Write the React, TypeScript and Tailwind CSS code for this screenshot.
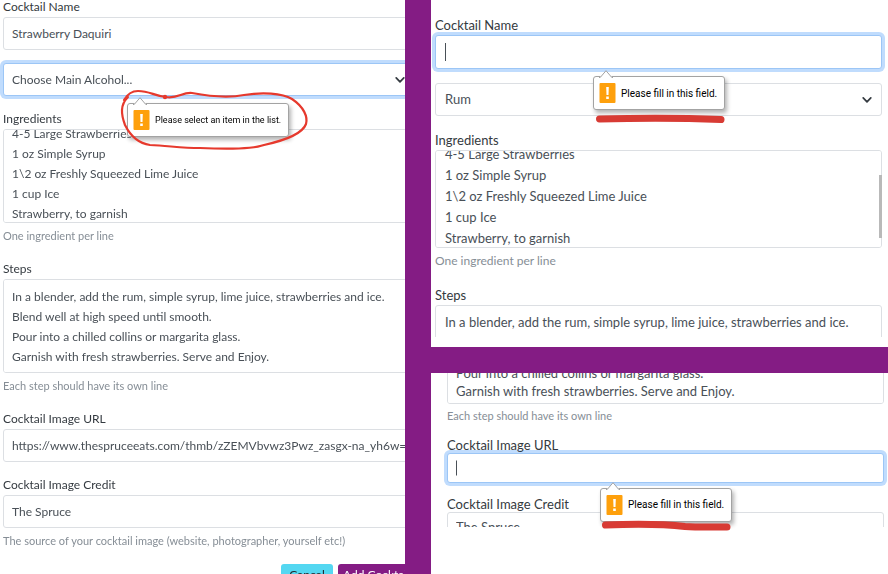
import { useEffect, useRef, type ReactNode } from "react";

function Tooltip({ text, size, children }: { text: string; size: "sm" | "md"; children?: ReactNode }) {
  const font = size === "sm" ? "text-[9px]" : "text-[10px]";
  return (
    <div role="alert" className="absolute z-10">
      <div
        className={`relative flex h-[34px] items-center gap-[5px] rounded-[3px] border border-[#a3a3a3] bg-white pr-[7px] pl-[5px] whitespace-nowrap text-black shadow-[2px_3px_4px_rgba(0,0,0,0.3)] [font-family:Roboto,sans-serif] ${font}`}
      >
        <svg aria-hidden="true" className="absolute -top-[7px] left-[5px]" width="14" height="8" viewBox="0 0 14 8">
          <path d="M0 8 L7 0.7 L14 8 Z" fill="#fff" />
          <path d="M0 7.5 H1.2 L7 0.7 L12.8 7.5 H14" fill="none" stroke="#a3a3a3" />
        </svg>
        <svg aria-hidden="true" width="17" height="20" viewBox="0 0 17 20">
          <rect x="0.5" width="16" height="20" rx="1" fill="#fea00c" />
          <path d="M7.2 4 H9.8 L9.5 12 H7.5 Z M7.2 13.4 H9.8 V16 H7.2 Z" fill="#fff" />
        </svg>
        <span>{text}</span>
      </div>
      {children}
    </div>
  );
}

function Chevron() {
  return (
    <svg aria-hidden="true" className="pointer-events-none absolute top-1/2 right-[10px] -translate-y-1/2" width="10" height="8" viewBox="0 0 10 8">
      <path d="M1.2 1.8 L5 5.8 L8.8 1.8" fill="none" stroke="#343a40" strokeWidth="1.7" strokeLinecap="round" strokeLinejoin="round" />
    </svg>
  );
}

function Caret({ className }: { className: string }) {
  return <span aria-hidden="true" className={`pointer-events-none absolute top-1/2 w-px -translate-y-1/2 bg-[#495057] ${className}`} />;
}

function ScrolledTextarea({ id, value, scroll, className }: { id: string; value: string; scroll: number; className: string }) {
  const ref = useRef<HTMLTextAreaElement>(null);
  useEffect(() => {
    if (ref.current) ref.current.scrollTop = scroll;
  }, [scroll]);
  return <textarea ref={ref} id={id} defaultValue={value} className={className} />;
}

const field = "block w-full rounded-[3px] border border-[#dcdfe3] bg-white text-[#495057] outline-none";
const focused = "block w-full rounded-[3px] border border-[#9cc6f6] bg-white text-[#495057] outline-none ring-3 ring-[#c0dcfd]";
const area = "resize-none [scrollbar-width:none] whitespace-pre overflow-x-hidden";

const ingredients =
  "4-5 Large Strawberries\n1 oz Simple Syrup\n1\\2 oz Freshly Squeezed Lime Juice\n1 cup Ice\nStrawberry, to garnish";
const steps =
  "In a blender, add the rum, simple syrup, lime juice, strawberries and ice.\nBlend well at high speed until smooth.\nPour into a chilled collins or margarita glass.\nGarnish with fresh strawberries. Serve and Enjoy.";

function SelectErrorForm() {
  return (
    <form className="-mt-[3px] -mr-[10px] flex flex-col gap-[13px] pl-[3px] text-xs leading-5">
      <div>
        <label htmlFor="a-name" className="block">Cocktail Name</label>
        <input id="a-name" defaultValue="Strawberry Daquiri" className={`${field} h-[33px] px-2`} />
      </div>
      <div className="relative">
        <select id="a-alcohol" aria-label="Main alcohol" className={`${focused} h-[33px] appearance-none px-2`}>
          <option>Choose Main Alcohol...</option>
        </select>
        <Chevron />
        <div className="absolute top-[40px] left-[124px]">
          <Tooltip size="sm" text="Please select an item in the list." />
          <svg aria-hidden="true" className="pointer-events-none absolute -top-[18px] -left-[13px] z-20" width="200" height="68" viewBox="0 0 200 68">
            <path
              d="M10 15 C14 8 18 6 24 6 C36 6 40 11 52 12 C64 14 68 7 78 8 C94 11 114 13 130 10 C148 7 168 8 178 14 C190 22 194 32 192 39 C188 50 168 56 150 60 C136 65 108 64 86 63 C68 63 56 61 36 60 C22 58 15 48 11 40 C7 29 6 20 14 12"
              fill="none"
              stroke="#e6392d"
              strokeWidth="2.2"
              strokeLinecap="round"
              strokeLinejoin="round"
            />
            <circle cx="51" cy="12" r="2.2" fill="#e6392d" />
          </svg>
        </div>
      </div>
      <div>
        <label htmlFor="a-ingredients" className="block">Ingredients</label>
        <ScrolledTextarea id="a-ingredients" value={ingredients} scroll={13} className={`${field} ${area} h-[94px] px-2 py-[7px]`} />
        <small className="mt-[3px] block text-[11px] text-[#868e96]">One ingredient per line</small>
      </div>
      <div>
        <label htmlFor="a-steps" className="block">Steps</label>
        <ScrolledTextarea id="a-steps" value={steps} scroll={0} className={`${field} ${area} h-[94px] px-2 py-[7px]`} />
        <small className="mt-[3px] block text-[11px] text-[#868e96]">Each step should have its own line</small>
      </div>
      <div>
        <label htmlFor="a-url" className="block">Cocktail Image URL</label>
        <input
          id="a-url"
          defaultValue="https://www.thespruceeats.com/thmb/zZEMVbvwz3Pwz_zasgx-na_yh6w=/804x0/filters"
          className={`${field} h-[33px] pl-2`}
        />
      </div>
      <div>
        <label htmlFor="a-credit" className="block">Cocktail Image Credit</label>
        <input id="a-credit" defaultValue="The Spruce" className={`${field} h-[33px] px-2`} />
        <small className="mt-[3px] block text-[11px] text-[#868e96]">
          The source of your cocktail image (website, photographer, yourself etc!)
        </small>
      </div>
      <div className="flex justify-end gap-[5px]">
        <button type="button" className="w-[52px] rounded-[3px] bg-[#54d7f1] py-[1px] text-[#212529]">Cancel</button>
        <button type="submit" className="w-[77px] rounded-[3px] bg-[#841c84] py-[1px] whitespace-nowrap text-white">Add Cocktail</button>
      </div>
    </form>
  );
}

function NameErrorForm() {
  return (
    <form className="flex flex-col gap-[14px] pt-[15px] pr-[6px] pl-1 text-[13px] leading-[21px]">
      <div>
        <label htmlFor="b-name" className="block leading-5">Cocktail Name</label>
        <div className="relative">
          <input id="b-name" className={`${focused} h-[34px] px-[9px]`} />
          <Caret className="left-[10px] h-[18px]" />
          <div className="absolute top-[41px] left-[158px]">
            <Tooltip size="md" text="Please fill in this field.">
              <svg aria-hidden="true" className="absolute top-[38px] left-[2px]" width="130" height="10" viewBox="0 0 130 10">
                <path d="M4.5 5 C40 4 90 4 126 5.5" fill="none" stroke="#d83b34" strokeWidth="7" strokeLinecap="round" />
              </svg>
            </Tooltip>
          </div>
        </div>
      </div>
      <div className="relative">
        <select id="b-alcohol" aria-label="Main alcohol" className={`${field} h-[33px] appearance-none px-[9px]`}>
          <option>Rum</option>
        </select>
        <Chevron />
      </div>
      <div>
        <label htmlFor="b-ingredients" className="block leading-5">Ingredients</label>
        <div className="relative">
          <ScrolledTextarea id="b-ingredients" value={ingredients} scroll={13} className={`${field} ${area} h-[98px] px-[9px] py-[6px]`} />
          <span aria-hidden="true" className="absolute top-[25px] right-0 h-[63px] w-[3px] bg-[#b9b9b9]" />
        </div>
        <small className="mt-[3px] block text-xs leading-5 text-[#868e96]">One ingredient per line</small>
      </div>
      <div>
        <label htmlFor="b-steps" className="block leading-5">Steps</label>
        <div className="h-8 overflow-hidden">
          <ScrolledTextarea id="b-steps" value={steps} scroll={0} className={`${field} ${area} h-[98px] px-[9px] py-[6px]`} />
        </div>
      </div>
    </form>
  );
}

function UrlErrorForm() {
  return (
    <form className="flex flex-col pr-1 pl-4 text-[13px] leading-[18px]">
      <div className="flex h-[154px] flex-col gap-[13px] [clip-path:inset(0_-4px_0_-4px)]">
        <div className="-mt-[52px]">
          <ScrolledTextarea id="c-steps" value={steps} scroll={0} className={`${field} ${area} h-[83px] px-2 py-[6px]`} />
          <label htmlFor="c-steps" className="mt-1 block text-[11px] leading-4 text-[#868e96]">Each step should have its own line</label>
        </div>
        <div>
          <label htmlFor="c-url" className="relative z-10 block leading-4">Cocktail Image URL</label>
          <div className="relative">
            <input id="c-url" className={`${focused} h-[30px] px-2`} />
            <Caret className="left-[9px] h-[15px]" />
          </div>
        </div>
        <div>
          <label htmlFor="c-credit" className="block leading-4">Cocktail Image Credit</label>
          <input id="c-credit" defaultValue="The Spruce" className={`${field} h-[30px] px-2`} />
        </div>
      </div>
      <div className="relative">
        <div className="absolute -top-[39px] left-[153px]">
          <Tooltip size="md" text="Please fill in this field.">
            <svg aria-hidden="true" className="absolute top-[32px] left-[1px]" width="132" height="12" viewBox="0 0 132 12">
              <path d="M4.5 5 C30 4 62 4 84 6.5 C98 7.5 112 7 126 7" fill="none" stroke="#d83b34" strokeWidth="7" strokeLinecap="round" />
            </svg>
          </Tooltip>
        </div>
      </div>
    </form>
  );
}

export default function App() {
  return (
    <main className="flex h-screen gap-[26px] overflow-hidden bg-[#841c84] text-[#343a40] [font-family:Lato,sans-serif]">
      <section className="min-w-0 flex-[405] overflow-hidden bg-white">
        <SelectErrorForm />
      </section>
      <div className="flex min-w-0 flex-[457] flex-col gap-[26px]">
        <section className="min-h-0 flex-[347] overflow-hidden bg-white">
          <NameErrorForm />
        </section>
        <section className="min-h-0 flex-[201] overflow-hidden bg-white">
          <UrlErrorForm />
        </section>
      </div>
    </main>
  );
}
